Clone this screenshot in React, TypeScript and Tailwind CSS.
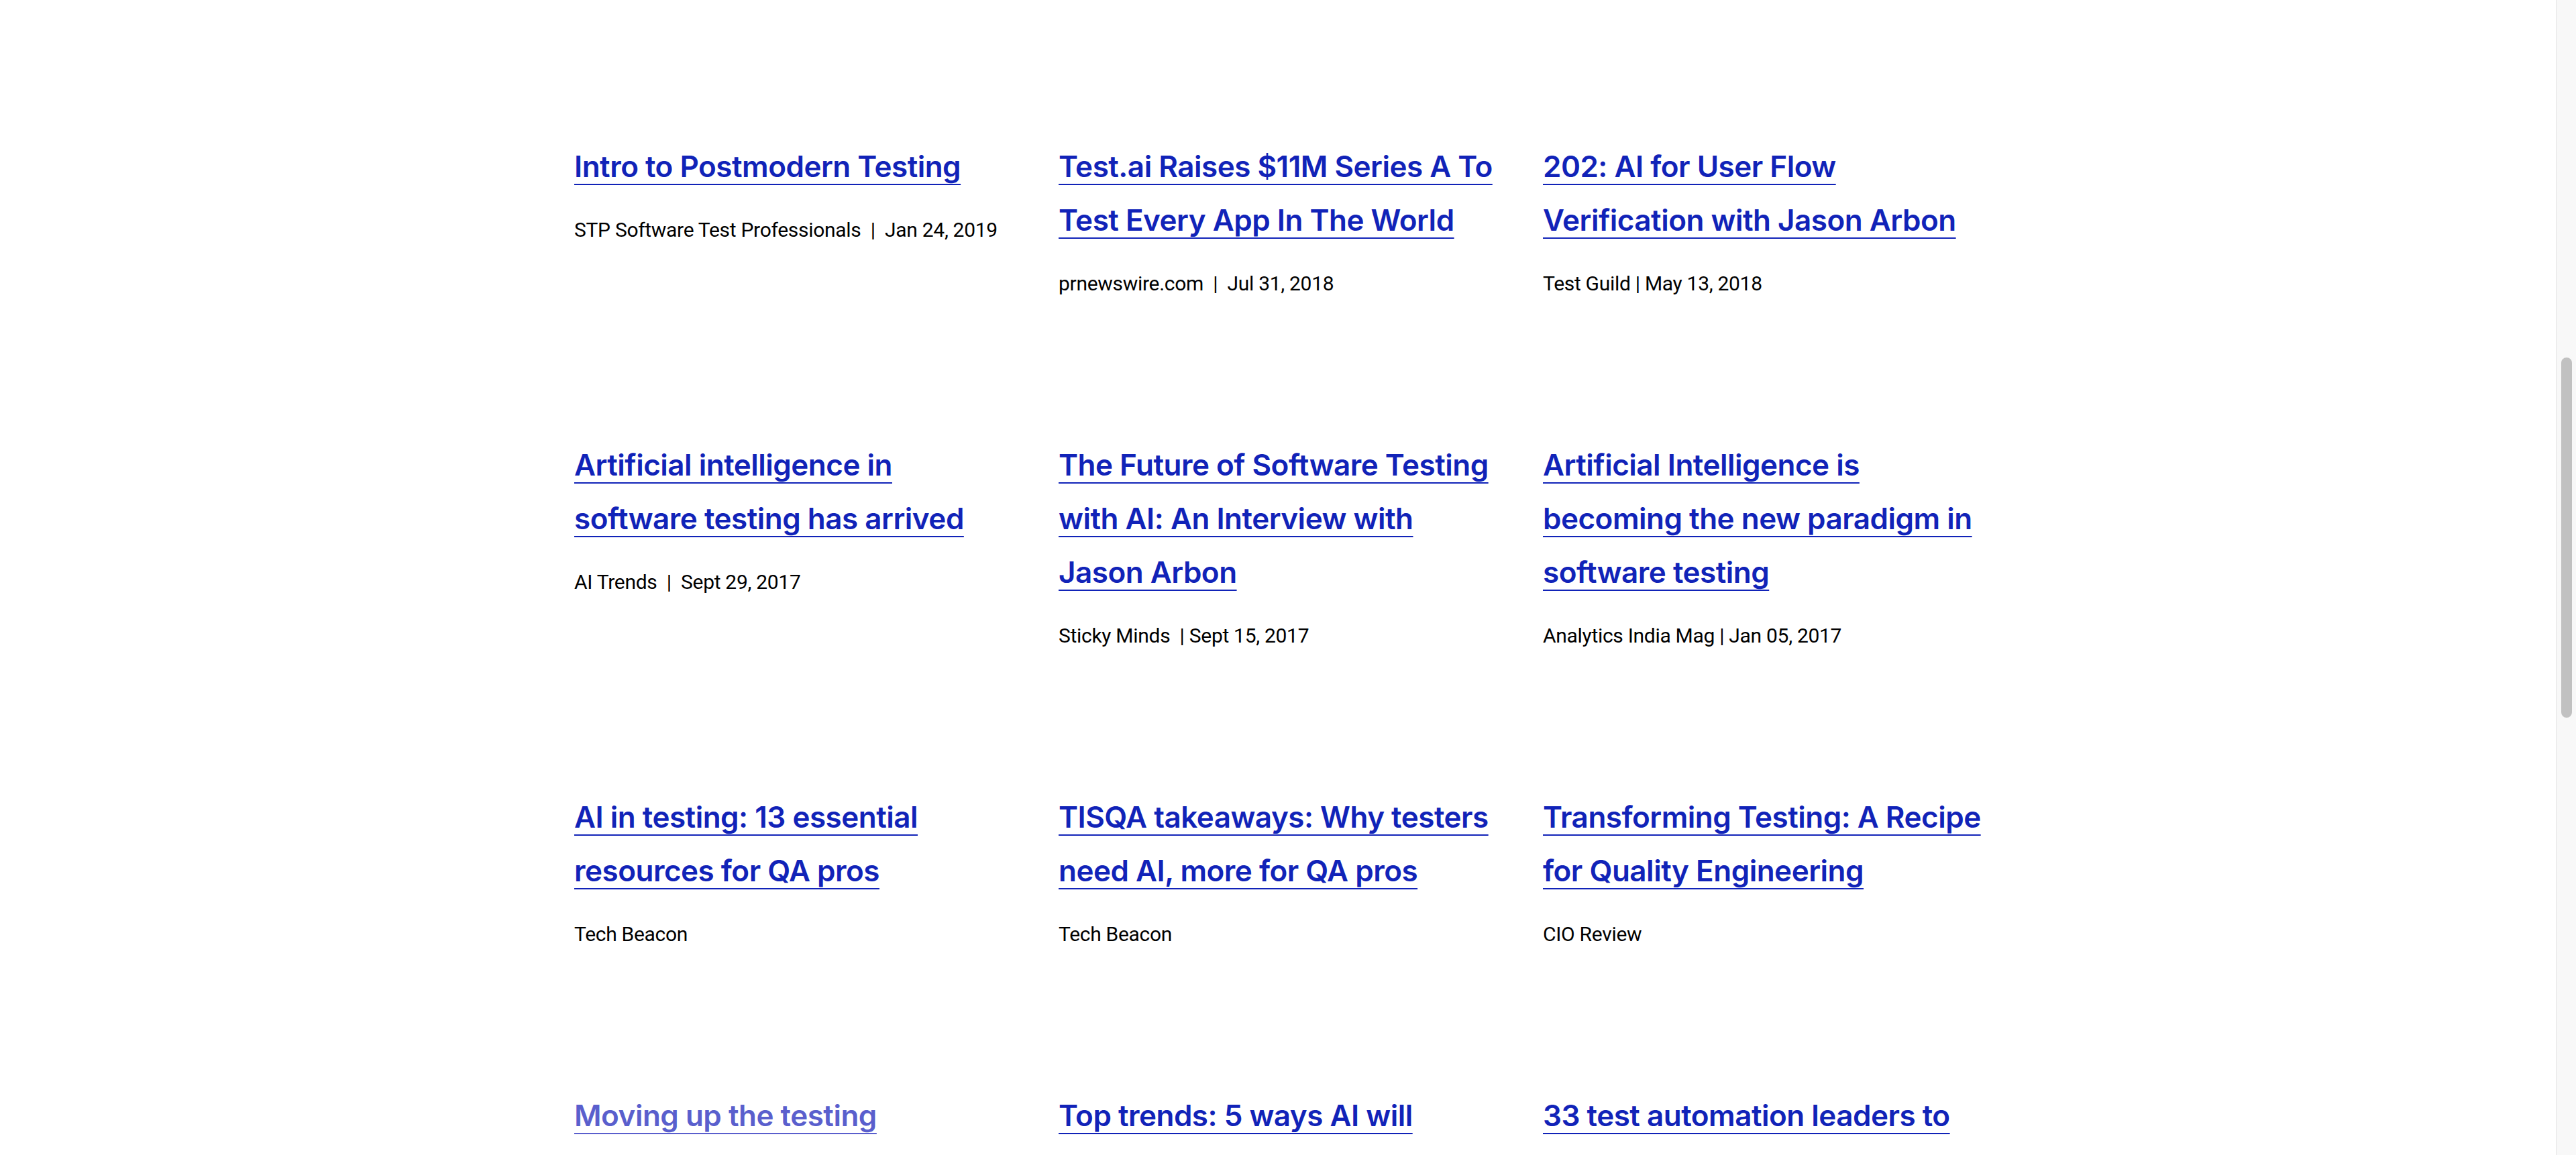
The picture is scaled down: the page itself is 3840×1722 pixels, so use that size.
import React from "react";

type Article = { lines: string[]; meta: string; visited?: boolean };

const rows: Article[][] = [
  [
    { lines: ["Intro to Postmodern Testing"], meta: "STP Software Test Professionals\u00a0 |\u00a0 Jan 24, 2019" },
    { lines: ["Test.ai Raises $11M Series A To", "Test Every App In The World"], meta: "prnewswire.com\u00a0 |\u00a0 Jul 31, 2018" },
    { lines: ["202: AI for User Flow", "Verification with Jason Arbon"], meta: "Test Guild | May 13, 2018" },
  ],
  [
    { lines: ["Artificial intelligence in", "software testing has arrived"], meta: "AI Trends\u00a0 |\u00a0 Sept 29, 2017" },
    { lines: ["The Future of Software Testing", "with AI: An Interview with", "Jason Arbon"], meta: "Sticky Minds\u00a0 | Sept 15, 2017" },
    { lines: ["Artificial Intelligence is", "becoming the new paradigm in", "software testing"], meta: "Analytics India Mag | Jan 05, 2017" },
  ],
  [
    { lines: ["AI in testing: 13 essential", "resources for QA pros"], meta: "Tech Beacon" },
    { lines: ["TISQA takeaways: Why testers", "need AI, more for QA pros"], meta: "Tech Beacon" },
    { lines: ["Transforming Testing: A Recipe", "for Quality Engineering"], meta: "CIO Review" },
  ],
  [
    { lines: ["Moving up the testing", "maturity model"], meta: "Tech Beacon", visited: true },
    { lines: ["Top trends: 5 ways AI will", "change software testing"], meta: "Tech Beacon" },
    { lines: ["33 test automation leaders to", "follow on Twitter"], meta: "Tech Beacon" },
  ],
];

function Card({ a }: { a: Article }) {
  return (
    <div className="flex flex-col">
      <div className="text-[44px] leading-[80px] tracking-[-0.5px] font-semibold font-['Inter','Noto_Sans',sans-serif] whitespace-nowrap">
        <a
          href="#"
          className={
            (a.visited ? "text-[#5a5fcd] decoration-[#5a5fcd] " : "text-[#1123b8] decoration-[#1123b8] ") +
            "underline decoration-2 underline-offset-[10px] [text-decoration-skip-ink:none]"
          }
        >
          {a.lines.map((l, i) => (
            <React.Fragment key={i}>
              {i > 0 && <br />}
              {l}
            </React.Fragment>
          ))}
        </a>
      </div>
      <p className="mt-[35px] text-[30px] leading-[40px] tracking-[-0.3px] text-black font-['Roboto','Inter',sans-serif] whitespace-nowrap">
        {a.meta}
      </p>
    </div>
  );
}

export default function App() {
  return (
    <div className="flex h-[1722px] w-full overflow-hidden bg-white">
      <main className="flex-1 min-w-0">
        <div className="mx-auto w-[2098px] pt-[208px] grid grid-cols-3 gap-x-[68px] gap-y-[210px] content-start">
          {rows.flat().map((a, i) => (
            <Card key={i} a={a} />
          ))}
        </div>
      </main>
      <div className="w-[30px] shrink-0 bg-[#f8f8f8] border-l border-[#e4e4e4]">
        <div className="ml-[7px] mt-[533px] h-[537px] w-[16px] rounded-full bg-[#c1c1c1]" />
      </div>
    </div>
  );
}
